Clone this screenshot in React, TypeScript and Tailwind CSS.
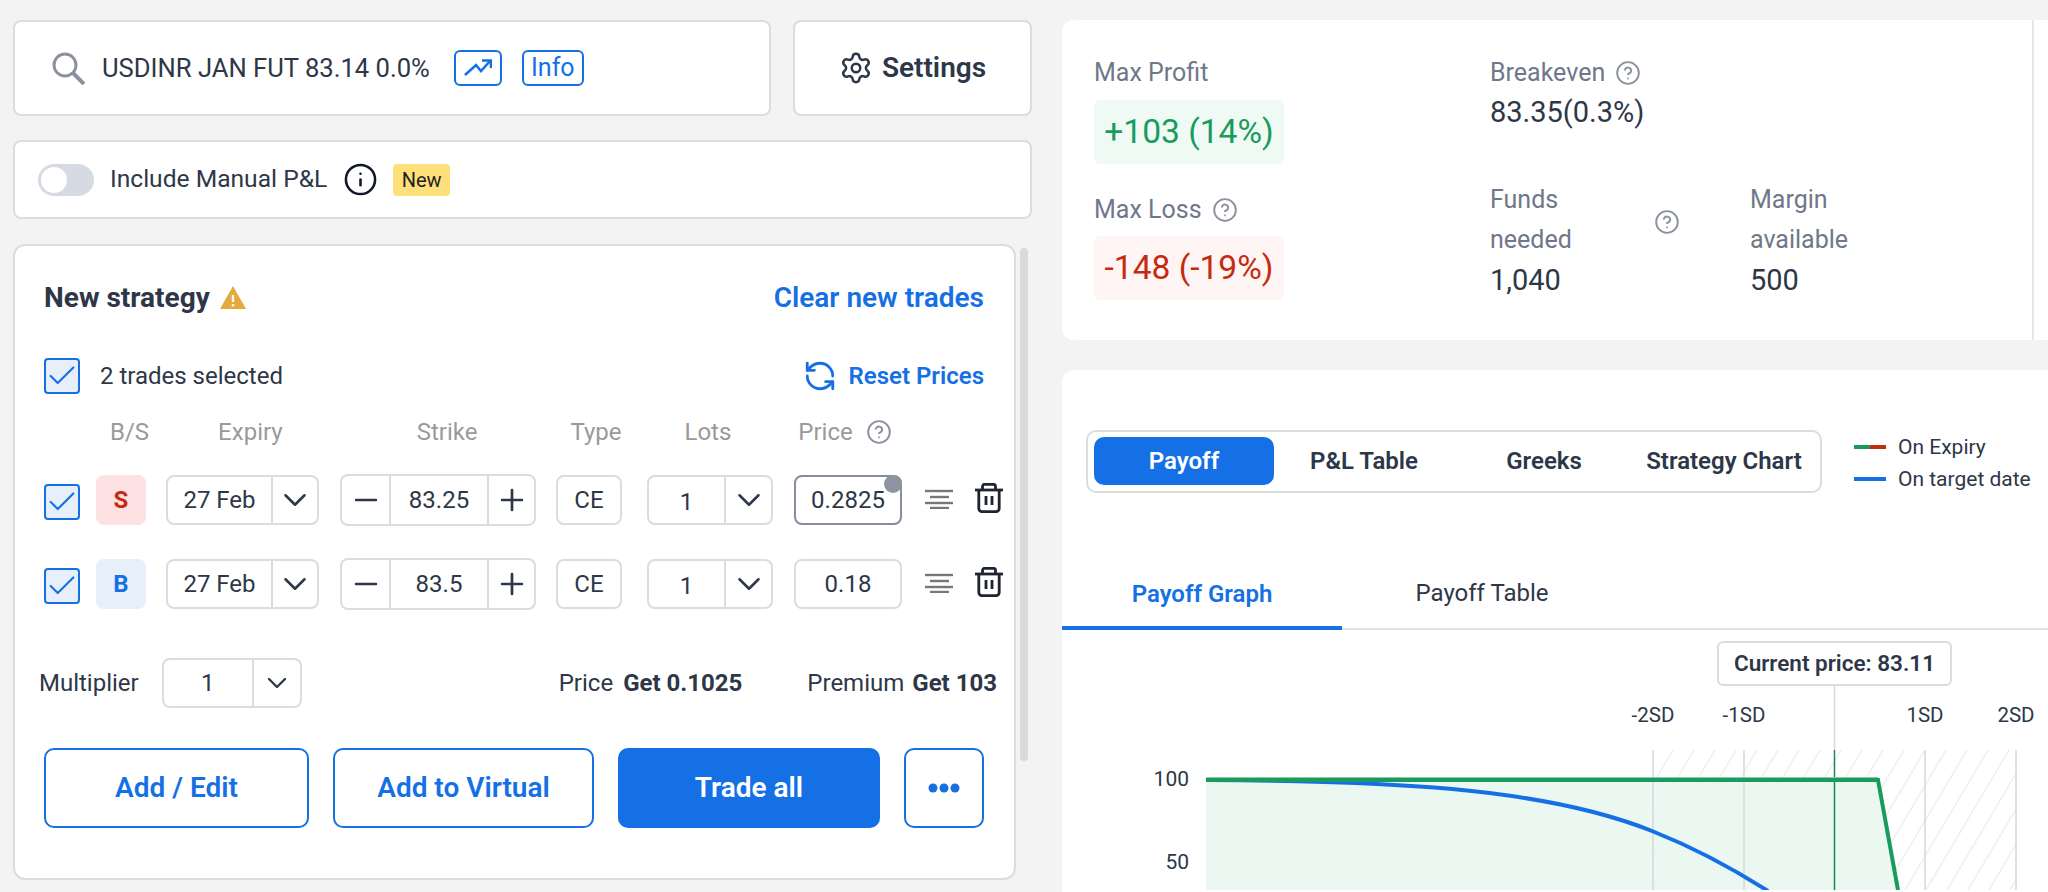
import { ChevronDown, Minus, Plus, Settings, RefreshCcw, Check, Info, CircleHelp } from "lucide-react";

const font = "font-['Roboto',sans-serif]";

function Tick({ className = "" }: { className?: string }) {
    return (
        <div className={`w-9 h-9 shrink-0 rounded-[4px] border-2 border-[#1570e5] bg-[#e7effb] flex items-center justify-center text-[#1570e5] ${className}`}>
            <Check size={34} strokeWidth={1.5} className="shrink-0" />
        </div>
    );
}

function Help({ size = 26, className = "" }: { size?: number; className?: string }) {
    return <CircleHelp size={size} strokeWidth={1.75} className={`text-[#8b919e] shrink-0 ${className}`} />;
}

function Chevron() {
    return <ChevronDown size={38} strokeWidth={1.6} className="shrink-0" />;
}

function AlignIcon() {
    return (
        <svg width={28} height={20} viewBox="0 0 28 20" className="ml-[23px] shrink-0 -mt-[2px]" stroke="#777" strokeWidth={2.4}>
            <line x1={0} y1={2} x2={28} y2={2} />
            <line x1={5} y1={8} x2={24} y2={8} />
            <line x1={0} y1={14} x2={28} y2={14} />
            <line x1={5} y1={19} x2={24} y2={19} />
        </svg>
    );
}

function TrashIcon() {
    return (
        <svg width={28} height={30} viewBox="0 0 28 30" fill="none" stroke="#1f2430" strokeWidth={2.8} className="ml-[22px] shrink-0 -mt-[4px]">
            <path d="M0 7H28" />
            <path d="M7.5 7V3.5a2.2 2.2 0 0 1 2.2-2.2h8.6a2.2 2.2 0 0 1 2.2 2.2V7" />
            <path d="M3.8 7V25.5a3.2 3.2 0 0 0 3.2 3.2h14a3.2 3.2 0 0 0 3.2-3.2V7" />
            <path d="M11 13V22M17 13V22" />
        </svg>
    );
}

function TradeRow({ side, strike, price, focused }: { side: "S" | "B"; strike: string; price: string; focused?: boolean }) {
    const box = "h-[50px] border-2 border-[#dcdcdc] rounded-[8px] flex items-center bg-white shrink-0";
    return (
        <div className="flex items-center h-[52px] pl-[29px] text-[24px] text-[#2d3748]">
            <Tick className="mt-[4px]" />
            <div className={`ml-4 w-[50px] h-[50px] shrink-0 rounded-[8px] flex items-center justify-center font-bold ${side === "S" ? "bg-[#fde1e3] text-[#c42b10]" : "bg-[#e7effb] text-[#1570e5]"}`}>
                {side}
            </div>
            <div className={`${box} ml-5 w-[153px]`}>
                <div className="w-[103px] text-center">27 Feb</div>
                <div className="flex-1 h-full border-l-2 border-[#dcdcdc] flex items-center justify-center">
                    <Chevron />
                </div>
            </div>
            <div className={`${box} ml-[21px] w-[196px] h-[52px]`}>
                <div className="w-[47px] h-full flex items-center justify-center"><Minus size={34} strokeWidth={1.9} /></div>
                <div className="w-[100px] h-full border-x-2 border-[#dcdcdc] flex items-center justify-center">{strike}</div>
                <div className="flex-1 h-full flex items-center justify-center"><Plus size={34} strokeWidth={1.9} /></div>
            </div>
            <div className={`${box} ml-5 w-[66px] justify-center`}>CE</div>
            <div className={`${box} ml-[25px] w-[126px]`}>
                <div className="w-[75px] text-center pt-1">1</div>
                <div className="flex-1 h-full border-l-2 border-[#dcdcdc] flex items-center justify-center">
                    <Chevron />
                </div>
            </div>
            <div className={`relative ml-[21px] w-[108px] h-[50px] shrink-0 rounded-[8px] border-2 flex items-center justify-center ${focused ? "border-[#868d9c]" : "border-[#dcdcdc]"}`}>
                {price}
                {focused && <span className="absolute -top-[2px] -right-[2px] w-[18px] h-[18px] rounded-full bg-[#8d95a2]" />}
            </div>
            <AlignIcon />
            <TrashIcon />
        </div>
    );
}

function Chart() {
    const hatch = [];
    for (let i = -12; i < 34; i++) {
        const x = 1653 + i * 21;
        hatch.push(<line key={i} x1={x} y1={892} x2={x + 83} y2={752} stroke="#efefef" strokeWidth={1.5} />);
    }
    return (
        <svg width={986} height={260} viewBox="1062 632 986 260" className="block">
            <defs>
                <clipPath id="sd"><rect x={1653} y={752} width={363} height={140} /></clipPath>
            </defs>
            <g clipPath="url(#sd)">{hatch}</g>
            <path d="M1206 782H1878L1898 892H1206Z" fill="#e9f7f0" fillOpacity={0.92} />
            {[1653, 1744, 1925, 2016].map((x) => (
                <line key={x} x1={x} y1={752} x2={x} y2={892} stroke="#d5d7da" strokeWidth={1.5} />
            ))}
            <line x1={1834.5} y1={687} x2={1834.5} y2={752} stroke="#d5d7da" strokeWidth={1.5} />
            <line x1={1834.5} y1={752} x2={1834.5} y2={892} stroke="#178a52" strokeWidth={1.5} />
            <path d="M1206 782C1380 783 1540 788 1652 833C1700 852 1735 872 1768 893" fill="none" stroke="#1570e5" strokeWidth={4} />
            <path d="M1206 779.5H1878" fill="none" stroke="#8cc9aa" strokeWidth={1} />
            <path d="M1206 782H1878L1898 892" fill="none" stroke="#1a9a5c" strokeWidth={4} />
            <g fontFamily="Roboto, sans-serif" fill="#2d3748" fontSize={21} textAnchor="end">
                <text x={1189} y={788}>100</text>
                <text x={1189} y={871}>50</text>
            </g>
            <g fontFamily="Roboto, sans-serif" fill="#2d3748" fontSize={20.5} textAnchor="middle">
                <text x={1653} y={724}>-2SD</text>
                <text x={1744} y={724}>-1SD</text>
                <text x={1925} y={724}>1SD</text>
                <text x={2016} y={724}>2SD</text>
            </g>
        </svg>
    );
}

export default function App() {
    return (
        <div className={`${font} w-[2048px] h-[892px] overflow-hidden bg-[#f3f3f3] flex text-[#2d3748]`}>
            <div className="w-[1062px] shrink-0 pl-[13px] pt-[20px]">
                <div className="flex w-[1019px] h-[96px] gap-[22px]">
                    <div className="flex-1 bg-white rounded-[8px] border-2 border-[#dcdcdc] flex items-center pl-[37px]">
                        <svg width={33} height={33} viewBox="0 0 33 33" fill="none" stroke="#8b919e" className="shrink-0">
                            <circle cx={13} cy={13} r={11} strokeWidth={3} />
                            <line x1={21} y1={21} x2={32} y2={32} strokeWidth={4} />
                        </svg>
                        <span className="ml-[17px] text-[25.6px] whitespace-nowrap">USDINR JAN FUT 83.14 0.0%</span>
                        <div className="ml-[24px] w-[48px] h-[36px] rounded-[6px] border-2 border-[#1570e5] flex items-center justify-center">
                            <svg width={28} height={18} viewBox="0 0 28 18" fill="none" stroke="#1570e5" strokeWidth={2.6}>
                                <path d="M1 16L12 6L17 12L26 2" />
                                <path d="M18 1.5H27V9" />
                            </svg>
                        </div>
                        <div className="ml-[20px] w-[62px] h-[36px] rounded-[6px] border-2 border-[#1570e5] flex items-center justify-center text-[#1570e5] text-[25px]">Info</div>
                    </div>
                    <div className="w-[239px] bg-white rounded-[8px] border-2 border-[#dcdcdc] flex items-center justify-center gap-[9px] text-[28px] font-semibold">
                        <Settings size={34} strokeWidth={1.75} />
                        Settings
                    </div>
                </div>
                <div className="mt-[24px] w-[1019px] h-[79px] bg-white rounded-[8px] border-2 border-[#dcdcdc] flex items-center pl-[23px] text-[24.6px]">
                    <div className="w-[56px] h-[32px] rounded-full bg-[#d6dbe3] p-[3px]"><div className="w-[26px] h-[26px] rounded-full bg-white" /></div>
                    <span className="ml-[16px]">Include Manual P&amp;L</span>
                    <Info size={35} strokeWidth={1.75} className="ml-[16px] text-[#111827]" />
                    <span className="ml-[15px] h-[32px] w-[57px] rounded-[4px] bg-[#fee07a] text-[#1f1f1f] text-[20px] flex items-center justify-center">New</span>
                </div>
                <div className="flex mt-[25px]">
                    <div className="w-[1003px] h-[636px] bg-white rounded-[12px] border-2 border-[#dcdcdc] shrink-0">
                        <div className="flex items-center justify-between pl-[29px] pr-[30px] pt-[26px] h-[78px]">
                            <div className="flex items-center gap-[9px] text-[28px] font-bold">
                                New strategy
                                <svg width={28} height={24} viewBox="0 0 28 24"><path d="M14 0L27 23H1Z" fill="#e6a93c" /><rect x={12.8} y={9} width={2.4} height={7} fill="#fff" /><rect x={12.8} y={18} width={2.4} height={2.4} fill="#fff" /></svg>
                            </div>
                            <span className="text-[28px] font-semibold text-[#1570e5]">Clear new trades</span>
                        </div>
                        <div className="flex items-center justify-between pl-[29px] pr-[30px] mt-[33px] h-[38px]">
                            <div className="flex items-center text-[24px]">
                                <Tick />
                                <span className="ml-[20px]">2 trades selected</span>
                            </div>
                            <div className="flex items-center gap-[12px] text-[24px] font-semibold text-[#1570e5]">
                                <RefreshCcw size={34} strokeWidth={2} />
                                Reset Prices
                            </div>
                        </div>
                        <div className="flex items-center h-[40px] mt-[17px] text-[24px] text-[#9a9a9a]">
                            <span className="ml-[95px]">B/S</span>
                            <span className="ml-[69px]">Expiry</span>
                            <span className="ml-[134px]">Strike</span>
                            <span className="ml-[93px]">Type</span>
                            <span className="ml-[63px]">Lots</span>
                            <span className="ml-[67px]">Price</span>
                            <Help className="ml-[13px]" />
                        </div>
                        <div className="mt-[22px] flex flex-col gap-[32px]">
                            <TradeRow side="S" strike="83.25" price="0.2825" focused />
                            <TradeRow side="B" strike="83.5" price="0.18" />
                        </div>
                        <div className="flex items-center h-[50px] mt-[48px] pl-[24px] pr-[17px] text-[24px]">
                            <span>Multiplier</span>
                            <div className="ml-[23px] w-[140px] h-[50px] rounded-[8px] border-2 border-[#dcdcdc] flex items-center">
                                <div className="w-[88px] text-center">1</div>
                                <div className="flex-1 h-full border-l-2 border-[#dcdcdc] flex items-center justify-center"><ChevronDown size={32} strokeWidth={1.75} /></div>
                            </div>
                            <span className="ml-auto">Price</span>
                            <span className="ml-[10px] font-bold">Get 0.1025</span>
                            <span className="ml-[65px]">Premium</span>
                            <span className="ml-[8px] font-bold">Get 103</span>
                        </div>
                        <div className="flex items-center mt-[40px] pl-[29px] text-[28px] font-semibold">
                            <div className="w-[265px] h-[80px] rounded-[10px] border-2 border-[#1570e5] text-[#1570e5] flex items-center justify-center">Add / Edit</div>
                            <div className="ml-[24px] w-[261px] h-[80px] rounded-[10px] border-2 border-[#1570e5] text-[#1570e5] flex items-center justify-center">Add to Virtual</div>
                            <div className="ml-[24px] w-[262px] h-[80px] rounded-[10px] bg-[#1570e5] text-white flex items-center justify-center">Trade all</div>
                            <div className="ml-[24px] w-[80px] h-[80px] rounded-[10px] border-2 border-[#1570e5] flex items-center justify-center">
                                <svg width={32} height={10} viewBox="0 0 32 10" fill="#1570e5"><circle cx={5} cy={5} r={4.5} /><circle cx={16} cy={5} r={4.5} /><circle cx={27} cy={5} r={4.5} /></svg>
                            </div>
                        </div>
                    </div>
                    <div className="ml-[4px] mt-[4px] w-[8px] h-[513px] rounded-full bg-[#d9dadc]" />
                </div>
            </div>
            <div className="flex-1 flex flex-col">
                <div className="h-[320px] mt-[20px] bg-white rounded-l-[12px] flex pl-[32px] pr-[15px] relative">
                    <div className="w-[396px] pt-[37px]">
                        <div className="h-[32px] flex items-center text-[25px] text-[#6f7789]">Max Profit</div>
                        <div className="mt-[11px] w-[190px] h-[64px] rounded-[6px] bg-[#f0faf5] text-[#1a9a5c] text-[33.6px] flex items-center justify-center whitespace-nowrap">+103 (14%)</div>
                        <div className="mt-[30px] h-[32px] flex items-center gap-[10px] text-[25px] text-[#6f7789]">Max Loss <Help /></div>
                        <div className="mt-[10px] w-[190px] h-[64px] rounded-[6px] bg-[#fef5f4] text-[#c42b10] text-[33.6px] flex items-center justify-center whitespace-nowrap">-148 (-19%)</div>
                    </div>
                    <div className="pt-[37px]">
                        <div className="h-[32px] flex items-center gap-[10px] text-[25px] text-[#6f7789]">Breakeven <Help /></div>
                        <div className="mt-[5px] text-[29px] leading-[36px]">83.35(0.3%)</div>
                        <div className="flex mt-[50px]">
                            <div className="w-[164px] text-[25px] leading-[40px] text-[#6f7789]">Funds<br />needed<div className="text-[29px] text-[#2d3748]">1,040</div></div>
                            <Help className="mt-[29px]" />
                            <div className="ml-[70px] text-[25px] leading-[40px] text-[#6f7789]">Margin<br />available<div className="text-[29px] text-[#2d3748]">500</div></div>
                        </div>
                    </div>
                    <div className="absolute right-[14px] top-0 bottom-0 w-[2px] bg-[#e5e7eb]" />
                </div>
                <div className="mt-[30px] flex-1 bg-white rounded-tl-[12px]">
                    <div className="flex items-center pt-[58px] pl-[24px] h-[124px]">
                        <div className="w-[736px] h-[63px] rounded-[10px] border-2 border-[#dcdcdc] flex items-center px-[6px] text-[24px] font-semibold shrink-0">
                            <div className="w-[180px] h-[48px] rounded-[10px] bg-[#1570e5] text-white flex items-center justify-center">Payoff</div>
                            <div className="w-[180px] text-center">P&amp;L Table</div>
                            <div className="w-[180px] text-center">Greeks</div>
                            <div className="flex-1 text-center whitespace-nowrap">Strategy Chart</div>
                        </div>
                        <div className="ml-[32px] text-[21px] leading-[32px] mt-[3px] whitespace-nowrap">
                            <div className="flex items-center"><span className="w-[16px] h-[4px] bg-[#1a9a5c]" /><span className="w-[16px] h-[4px] bg-[#c42b10] mr-[12px]" />On Expiry</div>
                            <div className="flex items-center gap-3"><span className="w-[32px] h-[4px] bg-[#1570e5]" />On target date</div>
                        </div>
                    </div>
                    <div className="flex h-[136px] border-b-2 border-[#dee2e6] items-end text-[24px]">
                        <div className="w-[280px] h-[68px] border-b-4 -mb-[2px] border-[#1570e5] text-[#1570e5] font-semibold flex items-center justify-center">Payoff Graph</div>
                        <div className="w-[280px] h-[68px] flex items-center justify-center pb-[2px]">Payoff Table</div>
                    </div>
                    <div className="relative">
                        <div className="absolute left-[655px] top-[11px] w-[235px] h-[45px] rounded-[6px] border-2 border-[#dcdcdc] bg-white flex items-center justify-center text-[22.5px] font-semibold whitespace-nowrap">Current price: 83.11</div>
                        <Chart />
                    </div>
                </div>
            </div>
        </div>
    );
}
